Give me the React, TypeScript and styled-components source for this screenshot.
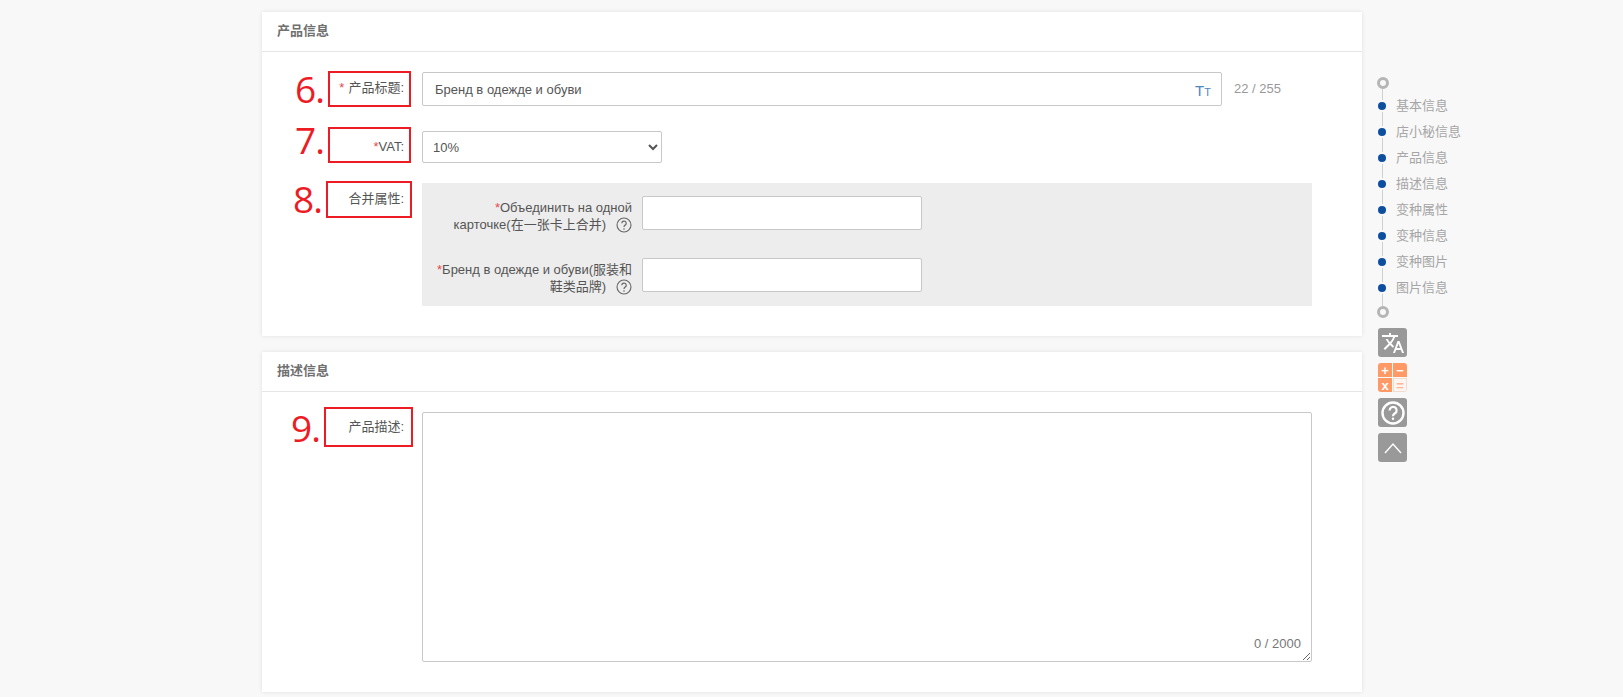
import React from 'react';
import styled, { createGlobalStyle } from 'styled-components';
import { MdTranslate } from 'react-icons/md';

const GlobalStyle = createGlobalStyle`
  html, body {
    margin: 0;
    background: #f8f8f8;
  }
  body {
    font-family: "Liberation Sans", "Noto Sans CJK SC", sans-serif;
    font-size: 13px;
    color: #555;
  }
`;

const Page = styled.div`
  display: flex;
  align-items: flex-start;
  padding: 12px 0 5px 262px;
`;

const Main = styled.div`
  width: 1100px;
  display: flex;
  flex-direction: column;
  gap: 16px;
`;

const Card = styled.section`
  background: #fff;
  box-shadow: 0 0 4px rgba(0, 0, 0, 0.1);
`;

const CardHeader = styled.div`
  height: 39px;
  line-height: 38px;
  padding-left: 15px;
  border-bottom: 1px solid #e6e6e6;
  font-size: 13px;
  font-weight: bold;
  color: #707070;
`;

const CardBody = styled.div<{ $padTop: number; $padBottom: number }>`
  padding: ${(p) => p.$padTop}px 50px ${(p) => p.$padBottom}px 0;
  display: flex;
  flex-direction: column;
  gap: 20px;
`;

const Row = styled.div`
  position: relative;
  display: flex;
  align-items: flex-start;
`;

const Label = styled.label<{ $top: number }>`
  width: 142px;
  margin-right: 18px;
  padding-top: ${(p) => p.$top}px;
  flex: none;
  text-align: right;
  line-height: 18px;
  color: #555;
`;

const Star = styled.span<{ $gap?: boolean }>`
  color: #e5484d;
  margin-right: ${(p) => (p.$gap ? 4 : 0)}px;
`;

const TitleField = styled.div`
  position: relative;
  width: 800px;
  height: 34px;
`;

const TextInput = styled.input<{ $wide?: boolean }>`
  box-sizing: border-box;
  display: block;
  width: ${(p) => (p.$wide ? '100%' : '280px')};
  height: 34px;
  padding: 0 12px;
  background: #fff;
  border: 1px solid #c8c8c8;
  border-radius: 2px;
  outline: none;
  font: inherit;
  color: #555;
`;

const CaseIcon = styled.span`
  position: absolute;
  right: 11px;
  top: 10px;
  color: #4f86c0;
  line-height: 18px;
  font-size: 15px;
`;

const SmallCaps = styled.span`
  font-size: 11px;
`;

const TitleCount = styled.span`
  margin-left: 12px;
  line-height: 34px;
  color: #999;
  font-size: 13px;
`;

const Select = styled.select`
  box-sizing: border-box;
  width: 240px;
  height: 32px;
  margin-top: 5px;
  padding: 0 6px;
  background: #fff;
  border: 1px solid #c8c8c8;
  border-radius: 2px;
  outline: none;
  font: inherit;
  color: #555;
`;

const AttrPanel = styled.div`
  flex: 1;
  height: 123px;
  box-sizing: border-box;
  padding-top: 13px;
  display: flex;
  flex-direction: column;
  gap: 28px;
  background: #ededed;
`;

const AttrRow = styled.div`
  height: 34px;
  display: flex;
  align-items: flex-start;
`;

const AttrLabel = styled.label`
  width: 195px;
  margin: 0 10px 0 15px;
  padding-top: 4px;
  flex: none;
  text-align: right;
  line-height: 16.5px;
  color: #555;
`;

const HelpMark = styled.svg`
  width: 16px;
  height: 16px;
  margin-left: 10px;
  vertical-align: -4px;
`;

const DescField = styled.div`
  position: relative;
  flex: 1;
  height: 250px;
`;

const DescArea = styled.textarea`
  box-sizing: border-box;
  display: block;
  width: 100%;
  height: 100%;
  padding: 10px;
  background: #fff;
  border: 1px solid #c8c8c8;
  border-radius: 2px;
  outline: none;
  font: inherit;
`;

const DescCount = styled.span`
  position: absolute;
  right: 11px;
  bottom: 11px;
  color: #777;
  font-size: 13px;
`;

const Annotation = styled.div<{ $left: number; $top: number; $width: number; $height: number }>`
  position: absolute;
  box-sizing: border-box;
  left: ${(p) => p.$left}px;
  top: ${(p) => p.$top}px;
  width: ${(p) => p.$width}px;
  height: ${(p) => p.$height}px;
  border: 2px solid #ed1c24;
`;

const AnnotationNumber = styled.span<{ $top: number }>`
  position: absolute;
  right: 100%;
  top: ${(p) => p.$top}px;
  margin-right: 6px;
  font-family: "Open Sans", sans-serif;
  font-size: 37px;
  line-height: 50px;
  letter-spacing: -1px;
  color: #ed1c24;
`;

const Side = styled.aside`
  width: 100px;
  margin: 65px 0 0 16px;
  display: flex;
  flex-direction: column;
`;

const Nav = styled.nav`
  position: relative;
  display: flex;
  flex-direction: column;
  &::before {
    content: '';
    position: absolute;
    left: 3.5px;
    top: 8px;
    bottom: 8px;
    width: 1px;
    background: #d0d0d0;
  }
`;

const Ring = styled.span`
  position: relative;
  display: block;
  box-sizing: border-box;
  width: 12px;
  height: 12px;
  margin-left: -1.5px;
  border: 3px solid #b5b5b5;
  border-radius: 50%;
  background: #f8f8f8;
`;

const NavList = styled.div`
  margin: 4px 0 5px;
  display: flex;
  flex-direction: column;
`;

const NavItem = styled.a`
  position: relative;
  display: block;
  height: 26px;
  padding-left: 18px;
  line-height: 26px;
  font-size: 13px;
  color: #a6a6a6;
  &::before {
    content: '';
    position: absolute;
    left: 0;
    top: 9px;
    width: 8px;
    height: 8px;
    border-radius: 50%;
    background: #0d4f9e;
    box-shadow: 0 0 0 2px #f8f8f8;
  }
`;

const Tools = styled.div`
  margin-top: 10px;
  display: flex;
  flex-direction: column;
  gap: 6px;
`;

const ToolButton = styled.button`
  box-sizing: border-box;
  width: 29px;
  height: 29px;
  padding: 0;
  display: flex;
  align-items: center;
  justify-content: center;
  background: #999;
  border: none;
  border-radius: 3px;
  color: #fff;
`;

const Calc = styled.div`
  width: 29px;
  height: 29px;
  display: grid;
  grid-template-columns: 1fr 1fr;
  grid-template-rows: 1fr 1fr;
  gap: 1px;
  border-radius: 3px;
  overflow: hidden;
`;

const CalcCell = styled.span<{ $light?: boolean }>`
  display: flex;
  align-items: center;
  justify-content: center;
  background: ${(p) => (p.$light ? '#fbf6f2' : '#ff9966')};
  box-shadow: ${(p) => (p.$light ? 'inset 0 0 0 1px #f3dccd' : 'none')};
  color: ${(p) => (p.$light ? '#ffb48f' : '#fff')};
  font-size: 13px;
  font-weight: bold;
  line-height: 1;
`;

const Help = () => (
  <HelpMark viewBox="0 0 16 16" fill="none">
    <circle cx="8" cy="8" r="7" stroke="#666" strokeWidth="1.1" />
    <path d="M5.8 6.3a2.2 2.2 0 1 1 3.4 1.8c-.8.5-1.2 1-1.2 1.9" stroke="#666" strokeWidth="1.2" />
    <circle cx="8" cy="12" r=".8" fill="#666" />
  </HelpMark>
);

const sections = ['基本信息', '店小秘信息', '产品信息', '描述信息', '变种属性', '变种信息', '变种图片', '图片信息'];

const App: React.FC = () => {
  const title = 'Бренд в одежде и обуви';

  return (
    <>
      <GlobalStyle />
      <Page>
        <Main>
          <Card>
            <CardHeader>产品信息</CardHeader>
            <CardBody $padTop={20} $padBottom={30}>
              <Row>
                <Label $top={7}>
                  <Star $gap>*</Star>产品标题:
                </Label>
                <TitleField>
                  <TextInput $wide defaultValue={title} />
                  <CaseIcon>
                    T<SmallCaps>T</SmallCaps>
                  </CaseIcon>
                </TitleField>
                <TitleCount>22 / 255</TitleCount>
                <Annotation $left={66} $top={-1} $width={83} $height={36}>
                  <AnnotationNumber $top={-9}>6.</AnnotationNumber>
                </Annotation>
              </Row>
              <Row>
                <Label $top={12}>
                  <Star>*</Star>VAT:
                </Label>
                <Select defaultValue="10%">
                  <option>10%</option>
                </Select>
                <Annotation $left={66} $top={1} $width={83} $height={36}>
                  <AnnotationNumber $top={-14}>7.</AnnotationNumber>
                </Annotation>
              </Row>
              <Row>
                <Label $top={7}>合并属性:</Label>
                <AttrPanel>
                  <AttrRow>
                    <AttrLabel>
                      <Star>*</Star>Объединить на одной карточке(在一张卡上合并)
                      <Help />
                    </AttrLabel>
                    <TextInput />
                  </AttrRow>
                  <AttrRow>
                    <AttrLabel>
                      <Star>*</Star>Бренд в одежде и обуви(服装和鞋类品牌)
                      <Help />
                    </AttrLabel>
                    <TextInput />
                  </AttrRow>
                </AttrPanel>
                <Annotation $left={64} $top={-2} $width={86} $height={37}>
                  <AnnotationNumber $top={-9}>8.</AnnotationNumber>
                </Annotation>
              </Row>
            </CardBody>
          </Card>
          <Card>
            <CardHeader>描述信息</CardHeader>
            <CardBody $padTop={20} $padBottom={30}>
              <Row>
                <Label $top={6}>产品描述:</Label>
                <DescField>
                  <DescArea />
                  <DescCount>0 / 2000</DescCount>
                </DescField>
                <Annotation $left={62} $top={-5} $width={89} $height={40}>
                  <AnnotationNumber $top={-6}>9.</AnnotationNumber>
                </Annotation>
              </Row>
            </CardBody>
          </Card>
        </Main>
        <Side>
          <Nav>
            <Ring />
            <NavList>
              {sections.map((name) => (
                <NavItem key={name}>{name}</NavItem>
              ))}
            </NavList>
            <Ring />
          </Nav>
          <Tools>
            <ToolButton>
              <MdTranslate size={24} />
            </ToolButton>
            <Calc>
              <CalcCell>+</CalcCell>
              <CalcCell>−</CalcCell>
              <CalcCell>x</CalcCell>
              <CalcCell $light>=</CalcCell>
            </Calc>
            <ToolButton>
              <svg width="26" height="26" viewBox="0 0 26 26" fill="none" stroke="#fff">
                <circle cx="13" cy="13" r="10.5" strokeWidth="2.4" />
                <path d="M9.6 10.4a3.5 3.5 0 1 1 5.4 2.9c-1.3.8-2 1.5-2 3" strokeWidth="2.2" />
                <circle cx="13" cy="18.8" r="1.2" fill="#fff" stroke="none" />
              </svg>
            </ToolButton>
            <ToolButton>
              <svg width="20" height="12" viewBox="0 0 20 12" fill="none" stroke="#fff" strokeWidth="1.4">
                <path d="M2 11 10 2l8 9" />
              </svg>
            </ToolButton>
          </Tools>
        </Side>
      </Page>
    </>
  );
};

export default App;
